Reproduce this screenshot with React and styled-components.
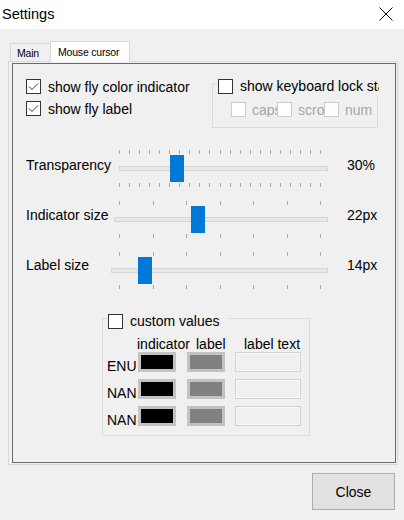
import styled, { createGlobalStyle } from 'styled-components';

const GlobalStyle = createGlobalStyle`
  html, body {
    margin: 0;
    padding: 0;
    background: #f0f0f0;
  }
  body {
    font-family: "Liberation Sans", Arial, sans-serif;
    font-size: 14px;
    color: #000;
  }
`;

const sliders = [
  { label: 'Transparency', value: '30%', trackLeft: 14, thumb: 65, ticks: 21, labelTop: 8 },
  { label: 'Indicator size', value: '22px', trackLeft: 9, thumb: 86, ticks: 7, labelTop: 7 },
  { label: 'Label size', value: '14px', trackLeft: 6, thumb: 33, ticks: 7, labelTop: 6 },
];

const languages = ['ENU', 'NAN', 'NAN'];

function Checkbox({ checked, disabled }) {
  return (
    <Box $disabled={disabled}>
      {checked && (
        <svg width="13" height="13" viewBox="0 0 13 13">
          <polyline points="2,6.5 5,9.5 11,3.5" fill="none" stroke="#333" strokeWidth="1" />
        </svg>
      )}
    </Box>
  );
}

function Slider({ label, value, trackLeft, thumb, ticks, labelTop }) {
  const first = 14;
  const last = 215;
  const marks = Array.from({ length: ticks }, (_, i) => first + Math.round((i * (last - first)) / (ticks - 1)));
  return (
    <SliderRow>
      <SliderLabel $top={labelTop}>{label}</SliderLabel>
      <TrackArea>
        {marks.map((x, i) => (
          <Tick key={'t' + i} style={{ left: x }} $pos="top" />
        ))}
        <Track style={{ left: trackLeft }} />
        <Thumb style={{ left: thumb }} />
        {marks.map((x, i) => (
          <Tick key={'b' + i} style={{ left: x }} $pos="bottom" />
        ))}
      </TrackArea>
      <SliderValue $top={labelTop}>{value}</SliderValue>
    </SliderRow>
  );
}

export default function App() {
  return (
    <>
      <GlobalStyle />
      <Window>
        <TitleBar>
          <Title>Settings</Title>
          <CloseX width="14" height="14" viewBox="0 0 14 14">
            <path d="M0.5 0.5 L13.5 13.5 M13.5 0.5 L0.5 13.5" stroke="#000" strokeWidth="1" />
          </CloseX>
        </TitleBar>

        <TabStrip>
          <Tab>Main</Tab>
          <Tab $active>Mouse cursor</Tab>
        </TabStrip>

        <TabPage>
          <Panel>
            <TopSection>
              <LeftCol>
                <CheckRow>
                  <Checkbox checked />
                  <span>show fly color indicator</span>
                </CheckRow>
                <CheckRow>
                  <Checkbox checked />
                  <span>show fly label</span>
                </CheckRow>
              </LeftCol>
              <KeyGroup>
                <GroupHeader>
                  <Checkbox />
                  <span>show keyboard lock state</span>
                </GroupHeader>
                <SubRow>
                  <SubItem $w={46}>
                    <Checkbox disabled />
                    <span>caps</span>
                  </SubItem>
                  <SubItem $w={47}>
                    <Checkbox disabled />
                    <span>scroll</span>
                  </SubItem>
                  <SubItem $w={50}>
                    <Checkbox disabled />
                    <span>num</span>
                  </SubItem>
                </SubRow>
              </KeyGroup>
            </TopSection>

            <Sliders>
              {sliders.map((s) => (
                <Slider key={s.label} {...s} />
              ))}
            </Sliders>

            <CustomGroup>
              <CustomHeader>
                <Checkbox />
                <span>custom values</span>
              </CustomHeader>
              <Headings>
                <Heading $shift={-1}>indicator</Heading>
                <Heading $shift={9}>label</Heading>
                <Heading $shift={9}>label text</Heading>
              </Headings>
              <ValueGrid>
                {languages.map((lang, i) => (
                  <Row key={i}>
                    <LangCell>{lang}</LangCell>
                    <Swatch $color="#000" />
                    <Swatch $color="#808080" />
                    <Field />
                  </Row>
                ))}
              </ValueGrid>
            </CustomGroup>
          </Panel>
        </TabPage>

        <Footer>
          <Button>Close</Button>
        </Footer>
      </Window>
    </>
  );
}

const Window = styled.div`
  width: 404px;
  height: 520px;
  background: #f0f0f0;
  display: flex;
  flex-direction: column;
  overflow: hidden;
`;

const TitleBar = styled.div`
  height: 29px;
  background: #fff;
  display: flex;
  align-items: center;
  padding-left: 2px;
  flex-shrink: 0;
`;

const Title = styled.span`
  font-size: 14.5px;
  line-height: 16px;
  margin-top: -1px;
`;

const CloseX = styled.svg`
  margin-left: auto;
  margin-right: 11px;
  margin-top: -2px;
`;

const TabStrip = styled.div`
  display: flex;
  align-items: flex-end;
  padding: 12px 0 0 10px;
`;

const Tab = styled.div`
  box-sizing: border-box;
  display: flex;
  align-items: center;
  font-size: 10.5px;
  letter-spacing: -0.2px;
  border: 1px solid #d9d9d9;
  border-bottom: none;
  width: ${(p) => (p.$active ? '80px' : '40px')};
  height: ${(p) => (p.$active ? '21px' : '18px')};
  padding: ${(p) => (p.$active ? '0 0 1px 7px' : '1px 0 0 6px')};
  background: ${(p) => (p.$active ? '#fff' : '#f0f0f0')};
  border-right: ${(p) => (p.$active ? '1px solid #d9d9d9' : 'none')};
  margin-bottom: ${(p) => (p.$active ? '-1px' : '0')};
  position: relative;
  z-index: ${(p) => (p.$active ? 1 : 0)};
`;

const TabPage = styled.div`
  box-sizing: border-box;
  margin-left: 8px;
  width: 390px;
  height: 404px;
  border: 1px solid #d9d9d9;
  padding: 1px 1px 1px 3px;
  display: flex;
`;

const Panel = styled.div`
  flex: 1;
  border: 1px solid #696969;
  display: flex;
  flex-direction: column;
`;

const TopSection = styled.div`
  display: flex;
  padding: 15px 0 0 13px;
`;

const LeftCol = styled.div`
  width: 186px;
  display: flex;
  flex-direction: column;
  gap: 7px;
`;

const CheckRow = styled.div`
  display: flex;
  align-items: center;
  gap: 7px;
  height: 15px;
  line-height: 16px;
  white-space: nowrap;
`;

const Box = styled.div`
  box-sizing: border-box;
  width: 15px;
  height: 15px;
  flex-shrink: 0;
  background: #fff;
  border: 1px solid ${(p) => (p.$disabled ? '#cccccc' : '#333333')};
  display: flex;
  align-items: center;
  justify-content: center;
`;

const KeyGroup = styled.div`
  box-sizing: border-box;
  width: 166px;
  height: 45px;
  margin-top: 4px;
  border: 1px solid #dcdcdc;
  display: flex;
  flex-direction: column;
`;

const GroupHeader = styled.div`
  margin: -5px -2px 0 5px;
  height: 18px;
  background: #f0f0f0;
  display: flex;
  align-items: flex-start;
  gap: 7px;
  overflow: hidden;
  white-space: nowrap;
  line-height: 15px;
`;

const SubRow = styled.div`
  display: flex;
  margin-top: 5px;
  padding-left: 18px;
`;

const SubItem = styled.div`
  width: ${(p) => p.$w}px;
  display: flex;
  align-items: center;
  gap: 6px;
  overflow: hidden;
  white-space: nowrap;
  color: #a6a6a6;
  height: 15px;
  line-height: 16px;
`;

const Sliders = styled.div`
  margin-top: 21px;
  display: flex;
  flex-direction: column;
  gap: 11px;
`;

const SliderRow = styled.div`
  display: flex;
  align-items: flex-start;
  height: 40px;
  padding-left: 13px;
`;

const SliderLabel = styled.div`
  width: 79px;
  line-height: 16px;
  margin-top: ${(p) => p.$top}px;
  white-space: nowrap;
`;

const TrackArea = styled.div`
  position: relative;
  width: 230px;
  height: 40px;
`;

const Tick = styled.div`
  position: absolute;
  width: 1px;
  height: 4px;
  background: #a8a8a8;
  top: ${(p) => (p.$pos === 'top' ? '1px' : '34px')};
`;

const Track = styled.div`
  position: absolute;
  box-sizing: border-box;
  top: 17px;
  right: 7px;
  height: 5px;
  background: #e7e7e7;
  border: 1px solid #d6d6d6;
`;

const Thumb = styled.div`
  position: absolute;
  top: 6px;
  width: 14px;
  height: 27px;
  background: #0078d7;
`;

const SliderValue = styled.div`
  margin-left: 12px;
  line-height: 16px;
  margin-top: ${(p) => p.$top}px;
`;

const CustomGroup = styled.div`
  box-sizing: border-box;
  width: 208px;
  height: 118px;
  margin: 27px 0 0 89px;
  border: 1px solid #dcdcdc;
  display: flex;
  flex-direction: column;
`;

const CustomHeader = styled.div`
  margin: -5px 0 0 5px;
  width: 120px;
  height: 16px;
  background: #f0f0f0;
  display: flex;
  align-items: flex-start;
  gap: 7px;
  line-height: 15px;
`;

const Headings = styled.div`
  display: grid;
  grid-template-columns: 49px 48px 66px;
  padding-left: 35px;
  margin-top: 6px;
  height: 16px;
  line-height: 16px;
`;

const Heading = styled.div`
  margin-left: ${(p) => p.$shift}px;
  white-space: nowrap;
`;

const ValueGrid = styled.div`
  display: flex;
  flex-direction: column;
  gap: 7px;
  padding-left: 4px;
`;

const Row = styled.div`
  display: grid;
  grid-template-columns: 31px 49px 48px 66px;
  height: 20px;
`;

const LangCell = styled.div`
  padding-top: 6px;
  line-height: 16px;
`;

const Swatch = styled.div`
  box-sizing: border-box;
  width: 38px;
  height: 20px;
  border: 3px solid #c3c3c3;
  background: ${(p) => p.$color};
`;

const Field = styled.div`
  box-sizing: border-box;
  width: 66px;
  height: 20px;
  border: 1px solid #d2d2d2;
  box-shadow: inset 0 0 0 1px #f8f8f8;
  background: #f0f0f0;
`;

const Footer = styled.div`
  display: flex;
  justify-content: flex-end;
  padding-right: 9px;
  margin-top: 8px;
`;

const Button = styled.button`
  box-sizing: border-box;
  width: 83px;
  height: 37px;
  border: 1px solid #adadad;
  background: #e1e1e1;
  font-family: "Liberation Sans", Arial, sans-serif;
  font-size: 14px;
  color: #000;
  padding: 0;
`;
